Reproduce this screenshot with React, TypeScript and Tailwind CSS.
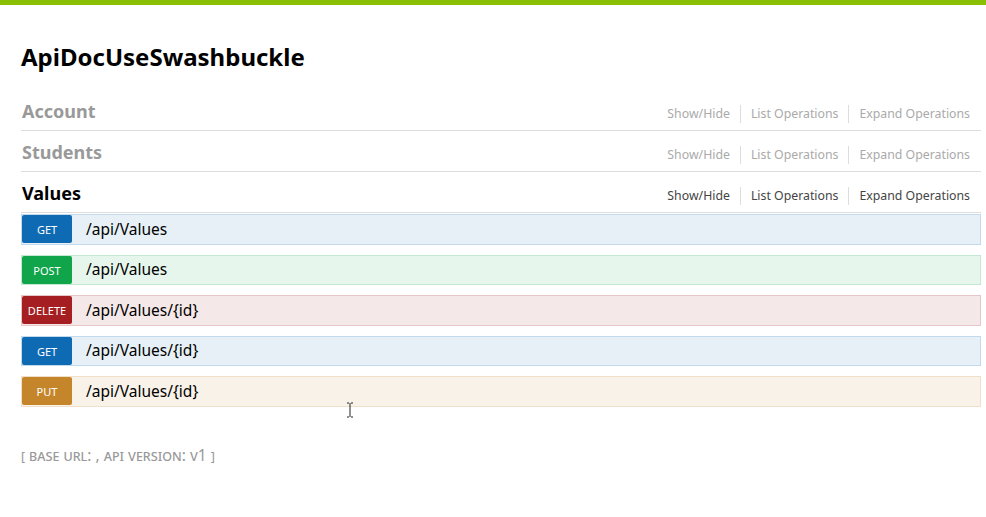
import React from 'react';

type Op = { method: string; path: string; badge: string; bg: string; border: string };

const ops: Op[] = [
  { method: 'GET', path: '/api/Values', badge: 'bg-[#0f6ab4]', bg: 'bg-[#e7f0f7]', border: 'border-[#c3d9ec]' },
  { method: 'POST', path: '/api/Values', badge: 'bg-[#10a54a]', bg: 'bg-[#e7f6ec]', border: 'border-[#c3e8d1]' },
  { method: 'DELETE', path: '/api/Values/{id}', badge: 'bg-[#a41e22]', bg: 'bg-[#f5e8e8]', border: 'border-[#e8c6c7]' },
  { method: 'GET', path: '/api/Values/{id}', badge: 'bg-[#0f6ab4]', bg: 'bg-[#e7f0f7]', border: 'border-[#c3d9ec]' },
  { method: 'PUT', path: '/api/Values/{id}', badge: 'bg-[#c5862b]', bg: 'bg-[#f9f2e9]', border: 'border-[#f0e0ca]' },
];

function Resource({ name, open }: { name: string; open?: boolean }) {
  const link = open ? 'text-[#444]' : 'text-[#aaa]';
  return (
    <div className="flex items-center justify-between h-[41px] border-b border-[#ddd]">
      <h2 className={`pl-[1px] text-[18px] font-bold leading-none pt-[1px] ${open ? 'text-black' : 'text-[#999]'}`}>{name}</h2>
      <ul className={`flex items-center text-[12.3px] pt-[7px] ${link}`}>
        <li className="pr-[10px] border-r border-[#ddd] leading-[18px]">Show/Hide</li>
        <li className="px-[10px] border-r border-[#ddd] leading-[18px]">List Operations</li>
        <li className="pl-[10px] pr-[11px] leading-[18px]">Expand Operations</li>
      </ul>
    </div>
  );
}

export default function App() {
  return (
    <div className="relative w-[986px] h-[517px] bg-white overflow-hidden font-['Noto_Sans','Open_Sans',sans-serif]">
      <div className="h-[5px] bg-[#89bf04]" />
      <div className="ml-[21px] w-[960px]">
        <h1 className="text-[24px] font-bold text-black leading-none pt-[40px] pb-[21px]">ApiDocUseSwashbuckle</h1>
        <Resource name="Account" />
        <Resource name="Students" />
        <Resource name="Values" open />
        <div className="flex flex-col gap-[10px] pt-[1px]">
          {ops.map((op, i) => (
            <div key={i} className={`flex items-center h-[30.5px] border ${op.bg} ${op.border}`}>
              <span
                className={`${op.badge} w-[50px] h-[28px] rounded-[2px] text-white text-[11px] flex items-center justify-center pt-[2px]`}
              >
                {op.method}
              </span>
              <span className="pl-[14px] text-[15.5px] text-black">{op.path}</span>
            </div>
          ))}
        </div>
        <p className="mt-[37px] text-[15.5px] text-[#999] [font-variant:small-caps]">
          [ base url: , api version: v1 ]
        </p>
      </div>
      <svg className="absolute left-[346px] top-[402px]" width="8" height="16" viewBox="0 0 8 16">
        <path d="M1 1h2M5 1h2M4 1v14M1 15h2M5 15h2" stroke="#222" strokeWidth="1" fill="none" />
      </svg>
    </div>
  );
}
